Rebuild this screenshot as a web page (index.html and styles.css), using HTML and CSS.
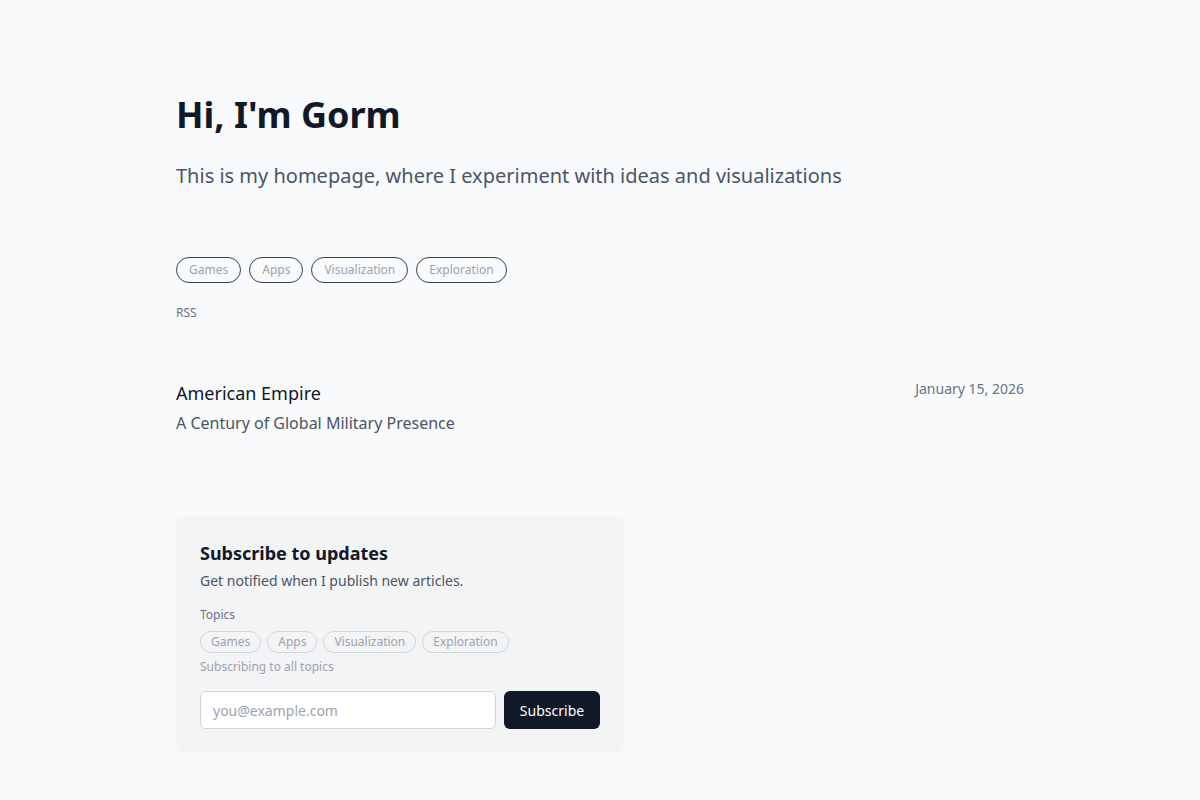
FILE: index.html
```html
<!DOCTYPE html>
<html lang="en">
<head>
    <meta charset="UTF-8">
    <title>Gorm</title>
    <link rel="stylesheet" href="styles.css">
</head>
<body>
<main class="page">
    <header class="intro">
        <h1>Hi, I'm Gorm</h1>
        <p class="lead">This is my homepage, where I experiment with ideas and visualizations</p>
    </header>

    <nav class="filters">
        <div class="tags">
            <a href="#" class="tag">Games</a>
            <a href="#" class="tag">Apps</a>
            <a href="#" class="tag">Visualization</a>
            <a href="#" class="tag">Exploration</a>
        </div>
        <a href="#" class="rss">RSS</a>
    </nav>

    <ul class="posts">
        <li class="post">
            <div class="post-text">
                <a href="#" class="post-title">American Empire</a>
                <p class="post-sub">A Century of Global Military Presence</p>
            </div>
            <time class="post-date">January 15, 2026</time>
        </li>
    </ul>

    <section class="subscribe">
        <h2>Subscribe to updates</h2>
        <p class="subscribe-desc">Get notified when I publish new articles.</p>
        <div class="topics-label">Topics</div>
        <div class="topics">
            <span class="topic">Games</span>
            <span class="topic">Apps</span>
            <span class="topic">Visualization</span>
            <span class="topic">Exploration</span>
        </div>
        <div class="topics-hint">Subscribing to all topics</div>
        <form class="subscribe-form" onsubmit="return false">
            <input type="email" placeholder="you@example.com">
            <button type="submit">Subscribe</button>
        </form>
    </section>
</main>
</body>
</html>
```

FILE: styles.css
```css
* {
    margin: 0;
    padding: 0;
    box-sizing: border-box;
}

body {
    background-color: #f8fafc;
    color: #111827;
    font-family: "Noto Sans", "Open Sans", sans-serif;
}

a {
    text-decoration: none;
    color: inherit;
}

ul {
    list-style: none;
}

.page {
    max-width: 848px;
    margin: 0 auto;
    padding: 95px 0 48px;
}

/* intro */
.intro h1 {
    font-size: 36px;
    line-height: 40px;
    font-weight: 700;
    color: #111827;
}

.lead {
    margin-top: 27px;
    font-size: 20px;
    line-height: 28px;
    color: #4b5563;
}

/* tag filters */
.filters {
    margin-top: 67px;
}

.tags {
    display: flex;
    gap: 8px;
}

.tag {
    display: inline-block;
    padding: 4px 12px;
    border: 1px solid #374151;
    border-radius: 999px;
    font-size: 12px;
    line-height: 16px;
    color: #9ca3af;
}

.rss {
    display: inline-block;
    margin-top: 22px;
    font-size: 12px;
    line-height: 16px;
    color: #6b7280;
}

/* post list */
.posts {
    margin-top: 57px;
}

.post {
    display: flex;
    justify-content: space-between;
    align-items: flex-start;
}

.post-title {
    display: block;
    font-size: 18px;
    line-height: 28px;
    color: #111827;
}

.post-sub {
    margin-top: 4px;
    font-size: 16px;
    line-height: 24px;
    color: #4b5563;
}

.post-date {
    font-size: 14px;
    line-height: 20px;
    color: #6b7280;
}

/* subscribe box */
.subscribe {
    width: 448px;
    margin-top: 81px;
    padding: 23px 24px;
    background-color: #f3f4f6;
    border-radius: 6px;
}

.subscribe h2 {
    font-size: 18px;
    line-height: 28px;
    font-weight: 700;
    color: #111827;
}

.subscribe-desc {
    margin-top: 4px;
    font-size: 14px;
    line-height: 20px;
    color: #4b5563;
}

.topics-label {
    margin-top: 16px;
    font-size: 12px;
    line-height: 16px;
    color: #6b7280;
}

.topics {
    display: flex;
    gap: 6px;
    margin-top: 8px;
}

.topic {
    padding: 2px 10px;
    border: 1px solid #d1d5db;
    border-radius: 999px;
    font-size: 12px;
    line-height: 16px;
    color: #9ca3af;
}

.topics-hint {
    margin-top: 6px;
    font-size: 12px;
    line-height: 16px;
    color: #9ca3af;
}

.subscribe-form {
    display: flex;
    gap: 8px;
    margin-top: 16px;
}

.subscribe-form input {
    flex: 1;
    height: 38px;
    padding: 0 12px;
    border: 1px solid #d1d5db;
    border-radius: 6px;
    background-color: #fff;
    font-family: inherit;
    font-size: 14px;
    color: #111827;
}

.subscribe-form input::placeholder {
    color: #9ca3af;
}

.subscribe-form button {
    width: 96px;
    height: 38px;
    border: none;
    border-radius: 6px;
    background-color: #111827;
    color: #fff;
    font-family: inherit;
    font-size: 14px;
    cursor: pointer;
}
```
